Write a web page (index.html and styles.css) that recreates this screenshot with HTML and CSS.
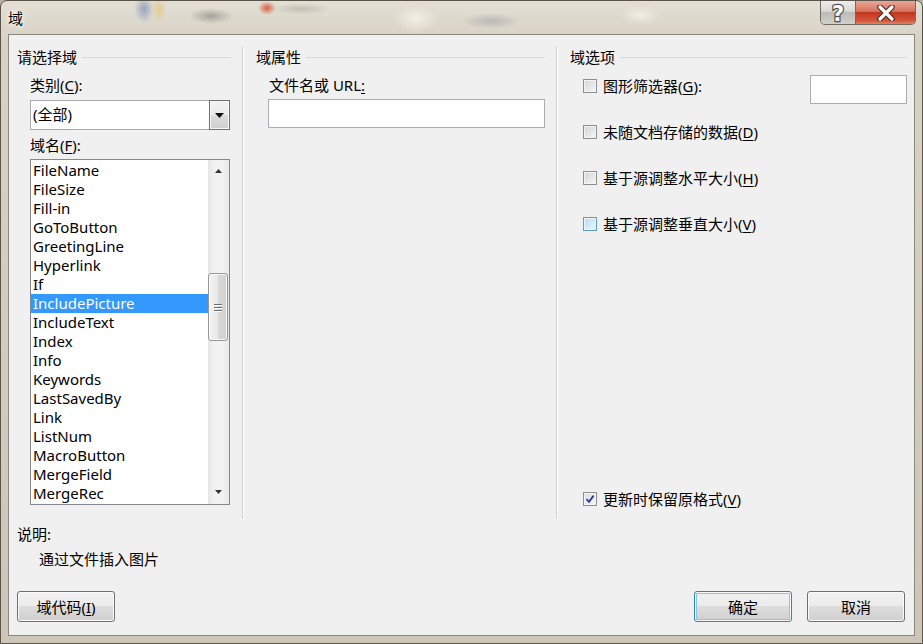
FILE: index.html
```html
<!DOCTYPE html>
<html lang="zh-CN">
<head>
<meta charset="UTF-8" />
<title>域</title>
<link rel="stylesheet" href="styles.css">
</head>
<body>
<div class="window">
  <div class="titlebar">
    <span class="title">域</span>
    <div class="caption-btns">
      <span class="cap-btn help">
        <svg width="22" height="22" viewBox="0 0 22 22">
          <text x="11" y="18.5" text-anchor="middle" class="help-glyph">?</text>
        </svg>
      </span>
      <span class="cap-btn close">
        <svg width="22" height="16" viewBox="0 0 22 16">
          <path d="M5 2 L17 14 M17 2 L5 14" stroke="#4a2a22" stroke-width="5.5" stroke-linecap="round"/>
          <path d="M5 2 L17 14 M17 2 L5 14" stroke="#fff" stroke-width="3.2" stroke-linecap="round"/>
        </svg>
      </span>
    </div>
  </div>

  <div class="client">
    <div class="panes">
      <section class="pane pane-pick">
        <div class="group-title">请选择域</div>
        <div class="field-label">类别(<u>C</u>):</div>
        <div class="combo">
          <span class="combo-text">(全部)</span>
          <span class="combo-btn">
            <svg width="9" height="5" viewBox="0 0 9 5"><path d="M0 0 H9 L4.5 5 Z" fill="#111"/></svg>
          </span>
        </div>
        <div class="field-label">域名(<u>F</u>):</div>
        <div class="listbox">
          <ul class="list">
            <li>FileName</li>
            <li>FileSize</li>
            <li>Fill-in</li>
            <li>GoToButton</li>
            <li>GreetingLine</li>
            <li>Hyperlink</li>
            <li>If</li>
            <li class="selected">IncludePicture</li>
            <li>IncludeText</li>
            <li>Index</li>
            <li>Info</li>
            <li>Keywords</li>
            <li>LastSavedBy</li>
            <li>Link</li>
            <li>ListNum</li>
            <li>MacroButton</li>
            <li>MergeField</li>
            <li>MergeRec</li>
          </ul>
          <div class="vscroll">
            <span class="arrow">
              <svg width="7" height="4" viewBox="0 0 7 4"><path d="M0 4 L3.5 0 L7 4 Z" fill="#333"/></svg>
            </span>
            <span class="thumb"><i></i><i></i><i></i></span>
            <span class="arrow arrow-down">
              <svg width="7" height="4" viewBox="0 0 7 4"><path d="M0 0 H7 L3.5 4 Z" fill="#333"/></svg>
            </span>
          </div>
        </div>
      </section>

      <section class="pane pane-props">
        <div class="group-title">域属性</div>
        <div class="field-label">文件名或 URL<u>:</u></div>
        <div class="textbox"></div>
      </section>

      <section class="pane pane-opts">
        <div class="group-title">域选项</div>
        <div class="opt opt-first">
          <span class="chk"></span>
          <span>图形筛选器(<u>G</u>):</span>
          <span class="textbox small"></span>
        </div>
        <div class="opt">
          <span class="chk"></span>
          <span>未随文档存储的数据(<u>D</u>)</span>
        </div>
        <div class="opt">
          <span class="chk"></span>
          <span>基于源调整水平大小(<u>H</u>)</span>
        </div>
        <div class="opt">
          <span class="chk hover"></span>
          <span>基于源调整垂直大小(<u>V</u>)</span>
        </div>
        <div class="opt opt-last">
          <span class="chk checked">
            <svg width="10" height="10" viewBox="0 0 10 10"><path d="M1.5 5.2 L4 7.8 L8.6 1.6" fill="none" stroke="#2c3f8c" stroke-width="1.8"/></svg>
          </span>
          <span>更新时保留原格式(<u>V</u>)</span>
        </div>
      </section>
    </div>

    <div class="desc">
      <div class="desc-label">说明:</div>
      <div class="desc-text">通过文件插入图片</div>
    </div>

    <div class="buttons">
      <button class="btn">域代码(<u>I</u>)</button>
      <span class="spacer"></span>
      <button class="btn default">确定</button>
      <button class="btn">取消</button>
    </div>
  </div>
</div>
</body>
</html>
```

FILE: styles.css
```css
* {
  box-sizing: border-box;
}
body {
  margin: 0;
  width: 923px;
  height: 644px;
  overflow: hidden;
  font-family: "Noto Sans", "Noto Sans CJK SC", sans-serif;
  font-size: 15px;
  color: #000;
  background: #b9b2a4;
}
u {
  text-decoration: underline;
  text-underline-offset: 2px;
}

/* window frame */
.window {
  width: 923px;
  height: 644px;
  display: flex;
  flex-direction: column;
  border: 1px solid #5a544a;
  border-radius: 7px 7px 0 0;
  background:
    radial-gradient(ellipse 10px 14px at 143px 8px, rgba(90,120,175,.55), transparent),
    radial-gradient(ellipse 8px 14px at 158px 8px, rgba(225,190,80,.5), transparent),
    radial-gradient(ellipse 22px 8px at 210px 15px, rgba(80,80,80,.4), transparent),
    radial-gradient(ellipse 9px 7px at 266px 7px, rgba(215,70,40,.85), transparent),
    radial-gradient(ellipse 30px 6px at 300px 8px, rgba(150,140,125,.35), transparent),
    radial-gradient(ellipse 22px 14px at 415px 18px, rgba(250,248,238,.7), transparent),
    radial-gradient(ellipse 30px 8px at 490px 20px, rgba(120,125,140,.35), transparent),
    radial-gradient(ellipse 20px 10px at 640px 14px, rgba(250,248,238,.6), transparent),
    linear-gradient(#e3dfd4, #d8d2c5 40px, #cdc6b7);
}
.titlebar {
  height: 33px;
  display: flex;
  align-items: flex-start;
  padding-left: 7px;
}
.title {
  padding-top: 7px;
  font-size: 15px;
  line-height: 20px;
  text-shadow: 0 0 6px #fff, 0 0 4px #fff;
}
.caption-btns {
  margin-left: auto;
  margin-right: 6px;
  display: flex;
  border: 1px solid #6f6a62;
  border-top: none;
  border-radius: 0 0 5px 5px;
  overflow: hidden;
}
.cap-btn {
  height: 23px;
  display: flex;
  align-items: center;
  justify-content: center;
}
.help {
  width: 35px;
  border-right: 1px solid #6f6a62;
  background: linear-gradient(#eeeeec, #d9d8d4 45%, #bcbab4 50%, #d2d0ca);
}
.help-glyph {
  font-family: "DejaVu Sans", sans-serif;
  font-weight: bold;
  font-size: 21px;
  fill: #fff;
  stroke: #505050;
  stroke-width: 2.4px;
  paint-order: stroke;
}
.close {
  width: 59px;
  background: linear-gradient(#e9a797, #d6735d 45%, #c1381f 50%, #d4553a 85%, #e38260);
}

/* client */
.client {
  flex: 1;
  margin: 0 7px 7px;
  border: 1px solid #8c877e;
  background: #f0f0f0;
  display: flex;
  flex-direction: column;
}
.panes {
  display: flex;
  margin-top: 12px;
  height: 472px;
}
.pane {
  display: flex;
  flex-direction: column;
  border-right: 1px solid #d0d0d0;
  box-shadow: 1px 0 0 #fff;
}
.pane-pick {
  width: 234px;
  padding: 0 11px 0 8px;
}
.pane-props {
  width: 314px;
  padding: 0 11px 0 13px;
}
.pane-opts {
  flex: 1;
  padding: 0 7px 10px 13px;
  border-right: none;
  box-shadow: none;
}
.group-title {
  display: flex;
  align-items: center;
  height: 20px;
  line-height: 20px;
}
.group-title::after {
  content: "";
  flex: 1;
  height: 1px;
  margin-left: 5px;
  background: #dadada;
}
.field-label {
  line-height: 20px;
  margin: 8px 0 0 13px;
}
.pane-pick .field-label + .listbox {
  margin-top: 4px;
}

/* combo box */
.combo {
  display: flex;
  width: 200px;
  height: 30px;
  margin: 5px 0 0 13px;
  border: 1px solid #a9abb0;
  background: #fff;
}
.combo-text {
  flex: 1;
  padding-left: 2px;
  line-height: 27px;
}
.combo-btn {
  width: 21px;
  margin: -1px -1px -1px 0;
  display: flex;
  align-items: center;
  justify-content: center;
  border: 1px solid #707070;
  background: linear-gradient(#f2f2f2, #ebebeb 50%, #dddddd 50%, #cfcfcf);
  box-shadow: inset 0 0 0 1px #f8f8f8;
}
.combo + .field-label {
  margin-top: 5px;
}

/* list box */
.listbox {
  display: flex;
  width: 200px;
  height: 346px;
  margin-left: 13px;
  border: 1px solid #828790;
  background: #fff;
  overflow: hidden;
}
.list {
  flex: 1;
  list-style: none;
  margin: 0;
  padding: 1px 0 0;
  overflow: hidden;
}
.list li {
  height: 19px;
  line-height: 19px;
  padding-left: 2px;
  white-space: nowrap;
}
.list li.selected {
  background: #3399ff;
  color: #fff;
}
.vscroll {
  width: 21px;
  display: flex;
  flex-direction: column;
  background: linear-gradient(to right, #e6e6e6, #f2f2f2 30%, #f2f2f2 70%, #e9e9e9);
}
.arrow {
  height: 21px;
  display: flex;
  align-items: center;
  justify-content: center;
}
.arrow-down {
  margin-top: auto;
  padding-bottom: 3px;
}
.thumb {
  height: 68px;
  margin: 92px 1px 0 0;
  border: 1px solid #979797;
  border-radius: 3px;
  background: linear-gradient(to right, #f4f4f4, #e8e8e8 50%, #d8d8d8 51%, #d0d0d0);
  box-shadow: inset 0 0 0 1px #f8f8f8;
  display: flex;
  flex-direction: column;
  align-items: center;
  justify-content: center;
  gap: 2px;
}
.thumb i {
  width: 8px;
  height: 1px;
  background: #6d6d6d;
  box-shadow: 0 1px 0 #fff;
}

/* text boxes */
.textbox {
  height: 29px;
  margin: 4px 0 0 12px;
  border: 1px solid #abadb3;
  background: #fff;
}
.textbox.small {
  width: 97px;
  height: 29px;
  margin: -1px 0 -8px auto;
  align-self: flex-start;
}

/* options */
.opt {
  display: flex;
  align-items: center;
  gap: 6px;
  height: 20px;
  line-height: 20px;
  margin: 26px 0 0 13px;
  white-space: nowrap;
}
.opt-first {
  margin-top: 9px;
}
.opt-last {
  margin-top: auto;
}
.chk {
  width: 14px;
  height: 14px;
  flex: none;
  border: 1px solid #8e8f8f;
  background: linear-gradient(135deg, #d2d4d8, #f6f6f6);
  box-shadow: inset 0 0 0 1px #f4f4f4;
  display: flex;
  align-items: center;
  justify-content: center;
}
.chk.hover {
  border-color: #5b9bc6;
  background: linear-gradient(135deg, #b6dcf6, #e9f6fd);
}
.chk.checked {
  background: linear-gradient(135deg, #d8dde6, #f6f6f6);
}

/* description */
.desc {
  padding-left: 8px;
  margin-top: 5px;
}
.desc-label {
  line-height: 20px;
}
.desc-text {
  line-height: 20px;
  margin: 5px 0 0 22px;
}

/* buttons */
.buttons {
  display: flex;
  gap: 15px;
  margin-top: 22px;
  padding: 0 9px 0 8px;
}
.spacer {
  flex: 1;
}
.btn {
  width: 98px;
  height: 31px;
  padding: 0;
  font: inherit;
  color: #000;
  border: 1px solid #707070;
  border-radius: 3px;
  background: linear-gradient(#f2f2f2, #ebebeb 50%, #dddddd 50%, #cfcfcf);
  box-shadow: inset 0 0 0 1px #fafafa;
}
.btn.default {
  border-color: #3c7fb1;
  box-shadow: inset 0 0 0 1px #fafafa, inset 0 0 0 2px #7fc7ee;
}
```
